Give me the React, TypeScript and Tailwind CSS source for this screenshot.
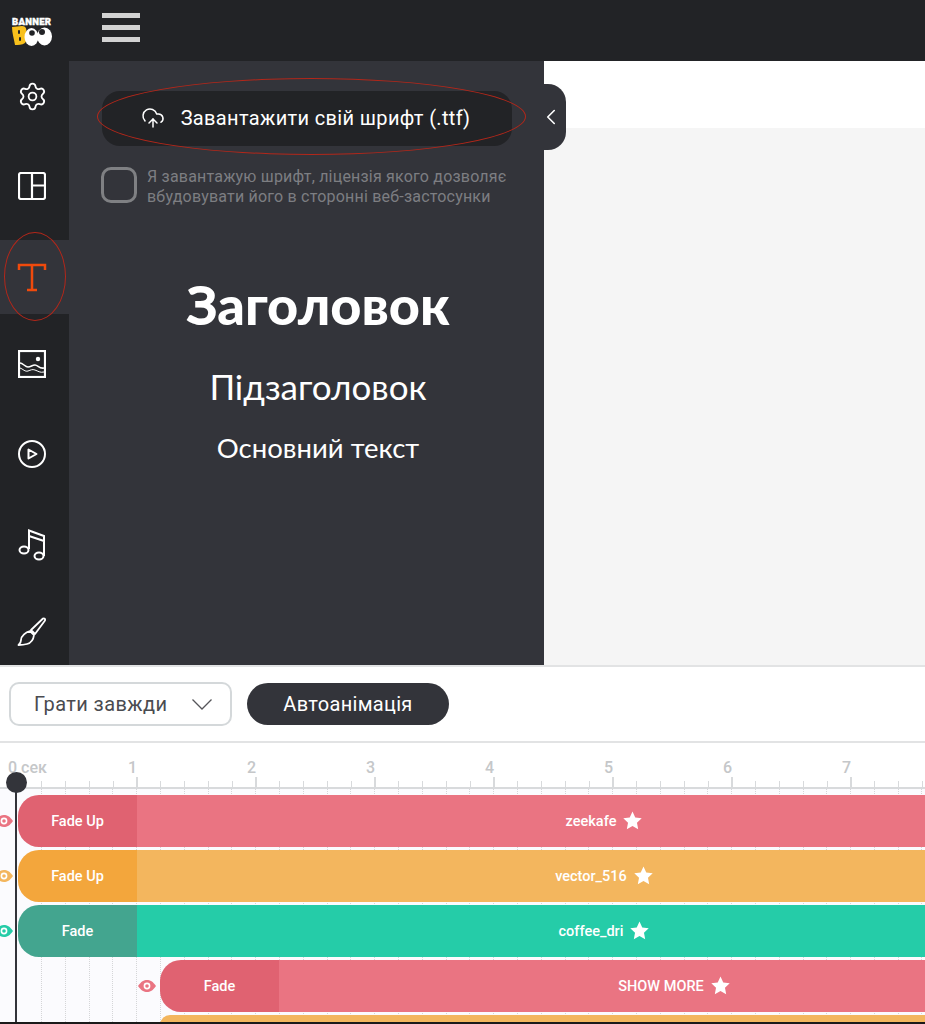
import { ChevronLeft, CloudUpload, Settings } from "lucide-react";

const tracks = [
  { label: "Fade Up", name: "zeekafe", dark: "bg-[#e06271]", light: "bg-[#ea7482]", eye: "#ea7482", indent: false },
  { label: "Fade Up", name: "vector_516", dark: "bg-[#f3a63c]", light: "bg-[#f3b65e]", eye: "#f3b65e", indent: false },
  { label: "Fade", name: "coffee_dri", dark: "bg-[#43a58f]", light: "bg-[#25cca8]", eye: "#25cca8", indent: false },
  { label: "Fade", name: "SHOW MORE", dark: "bg-[#e06271]", light: "bg-[#ea7482]", eye: "#ea7482", indent: true },
];

const gridLines = Array.from({ length: 38 }, (_, i) => i);

function Eye({ color }: { color: string }) {
  return (
    <svg width="18" height="12" viewBox="0 0 18 12" className="shrink-0">
      <path d="M0 6C3 1.500 6 0 9 0s6 1.500 9 6c-3 4.500-6 6-9 6S3 10.500 0 6z" fill={color} />
      <circle cx="9" cy="6" r="3.400" fill="#fff" />
      <circle cx="9" cy="6" r="1.800" fill={color} />
    </svg>
  );
}

function Star() {
  return (
    <svg width="19" height="19" viewBox="0 0 20 20" className="mb-[2px] shrink-0">
      <path d="M10 .5l2.900 6.300 6.800.8-5 4.700 1.300 6.800-6-3.400-6 3.400 1.300-6.800-5-4.700 6.800-.8z" fill="#fff" />
    </svg>
  );
}

function Logo() {
  return (
    <svg width="42" height="32" viewBox="0 0 42 32">
      <text x="1" y="9.500" fontSize="9.500" fontWeight="900" fill="#fff" stroke="#fff" strokeWidth="0.4" fontFamily="Roboto, sans-serif" letterSpacing="0.3">
        BANNER
      </text>
      <path d="M1 12l10-1c4 0 5 3 4 7 2 3 1 8-1 10-3 2-7 2-10 2-1-6-3-12-3-18z" fill="#f8c01c" />
      <rect x="7" y="15" width="2" height="4" rx="1" fill="#222326" />
      <rect x="8" y="22" width="2" height="4" rx="1" fill="#222326" />
      <ellipse cx="20.500" cy="22" rx="7" ry="9" fill="#fff" />
      <ellipse cx="33.500" cy="21.500" rx="7.500" ry="9" fill="#fff" />
      <circle cx="21" cy="18" r="2.800" fill="#222326" />
      <circle cx="31" cy="17" r="3" fill="#222326" />
    </svg>
  );
}

function SideIcon({ children, active, h }: { children: React.ReactNode; active?: boolean; h: string }) {
  return (
    <div className={"flex shrink-0 items-center justify-center pr-[5px] " + h + (active ? " bg-[#33343a]" : "")}>
      {children}
    </div>
  );
}

export default function App() {
  return (
    <div className="relative flex h-[1024px] w-[925px] flex-col overflow-hidden bg-white font-['Roboto',sans-serif]">
      {/* top bar */}
      <header className="flex h-[61px] shrink-0 items-center bg-[#222326] pl-[11px]">
        <Logo />
        <div className="mb-[6px] ml-[49px] flex w-[38px] flex-col gap-[7px]">
          <span className="h-[5px] bg-[#d2d2d2]" />
          <span className="h-[5px] bg-[#d2d2d2]" />
          <span className="h-[5px] bg-[#d2d2d2]" />
        </div>
      </header>

      <div className="flex h-[604px] shrink-0">
        {/* icon rail */}
        <nav className="flex w-[69px] shrink-0 flex-col overflow-hidden bg-[#222326]">
          <SideIcon h="h-[70px]">
            <Settings size={31} strokeWidth={1.4} color="#fff" />
          </SideIcon>
          <SideIcon h="h-[109px]">
            <svg width="28" height="28" viewBox="0 0 28 28" fill="none" stroke="#fff" strokeWidth="2.200">
              <rect x="1" y="1" width="26" height="26" rx="2" />
              <path d="M14 1v26M14 13.500h13" />
            </svg>
          </SideIcon>
          <SideIcon h="h-[74px]" active>
            <svg width="30" height="30" viewBox="0 0 30 30" fill="none" stroke="#f04a0c" strokeWidth="2.500">
              <path d="M2 8V3h26v5M15 3v25M10 28h10" />
            </svg>
          </SideIcon>
          <SideIcon h="h-[100px]">
            <svg width="28" height="28" viewBox="0 0 28 28" fill="none" stroke="#fff" strokeWidth="2.200">
              <rect x="1" y="1" width="26" height="26" />
              <path d="M2 13c3 0 5 4 8 4s4-2 7-2 4 4 9 3" strokeWidth="1.600" />
              <path d="M2 18c3 1 5 4 8 3s4-2 7-1 5 3 9 2" strokeWidth="1" />
              <circle cx="20" cy="9" r="2.200" fill="#fff" stroke="none" />
            </svg>
          </SideIcon>
          <SideIcon h="h-[80px]">
            <svg width="30" height="30" viewBox="0 0 30 30" fill="none" stroke="#fff" strokeWidth="2">
              <circle cx="15" cy="15" r="13" />
              <path d="M11.500 10.500v9l8-4.500z" strokeLinejoin="round" />
            </svg>
          </SideIcon>
          <SideIcon h="h-[102px]">
            <svg width="28" height="32" viewBox="0 0 28 32" fill="none" stroke="#fff" strokeWidth="2">
              <ellipse cx="6" cy="21" rx="4.500" ry="3.500" />
              <ellipse cx="21" cy="27" rx="4.500" ry="3.500" />
              <path d="M11 20V1.500L26 7v20M11 7l15 5" />
            </svg>
          </SideIcon>
          <SideIcon h="h-[72px]">
            <svg width="30" height="30" viewBox="0 0 30 30" fill="none" stroke="#fff" strokeWidth="1.800" strokeLinejoin="round">
              <path d="M26 1.500c1.500-.5 2.500.5 2 2L18 17l-4-4z" />
              <path d="M13 14l4 4c-.5 4-3 8-7 9-3 .8-6 1-8.500 1 2-1.500 2.500-3 2.500-5 0-4 5-8 9-9z" />
            </svg>
          </SideIcon>
        </nav>

        {/* text panel */}
        <section className="flex w-[475px] shrink-0 flex-col bg-[#33343a] pl-[33px] pr-[32px] pt-[30px]">
          <button className="flex h-[55px] w-[410px] items-center justify-center gap-[16px] rounded-[18px] bg-[#222326] pb-[1px] pr-[3px] text-[20px] tracking-[0.35px] text-white">
            <CloudUpload size={24} strokeWidth={1.5} color="#fff" />
            <span>Завантажити свій шрифт (.ttf)</span>
          </button>
          <div className="-ml-[1px] mt-[21px] flex gap-[10px]">
            <div className="h-[36px] w-[36px] shrink-0 rounded-[10px] border-[3px] border-[#7f8083]" />
            <p className="text-[16px] leading-[20px] tracking-[0.2px] text-[#7d7e82]">
              Я завантажую шрифт, ліцензія якого дозволяє
              <br />
              вбудовувати його в сторонні веб-застосунки
            </p>
          </div>
          <div className="ml-[22px] mt-[61px] flex flex-col items-center font-['Lato','Noto_Sans',sans-serif] text-white">
            <h1 className="text-[54px] font-black leading-[74px]">Заголовок</h1>
            <h2 className="mt-[21px] text-[35px] leading-[46px]">Підзаголовок</h2>
            <p className="mt-[20px] text-[27.500px] leading-[38px]">Основний текст</p>
          </div>
        </section>

        {/* canvas */}
        <main className="flex-1 bg-[#f5f5f5]">
          <div className="h-[67px] bg-white" />
        </main>
      </div>

      {/* collapse tab over the canvas */}
      <div className="absolute left-[544px] top-[84px] flex h-[66px] w-[22px] items-center justify-center rounded-r-[18px] bg-[#33343a] pr-[8px]">
        <ChevronLeft size={26} strokeWidth={1.5} color="#fff" className="shrink-0" />
      </div>

      {/* animation toolbar */}
      <div className="flex h-[78px] shrink-0 items-center gap-[15px] border-y-2 border-[#e2e3e4] pl-[9px]">
        <div className="flex h-[44px] w-[223px] items-center justify-between rounded-[10px] border-2 border-[#d4d8da] pl-[23px] pr-[18px] text-[20px] tracking-[0.4px] text-[#4a4b50]">
          <span>Грати завжди</span>
          <svg width="20" height="11" viewBox="0 0 20 11" fill="none" stroke="#55565a" strokeWidth="1.300">
            <path d="M.5.5L10 10 19.500.5" />
          </svg>
        </div>
        <button className="h-[42px] w-[202px] rounded-full bg-[#33343a] text-[20px] tracking-[0.3px] text-white">
          Автоанімація
        </button>
      </div>

      {/* ruler */}
      <div className="h-[46px] shrink-0 border-b-2 border-[#d8dadc] pl-[17px]">
        <div className="flex h-full">
          {["0 сек", "1", "2", "3", "4", "5", "6", "7"].map((n) => (
            <div key={n} className="relative h-full w-[119px] shrink-0">
              <span className={"absolute top-[15px] text-[16px] font-medium leading-[20px] text-[#c5c7c9] " + (n === "0 сек" ? "-left-[9px]" : "-left-[8px]")}>
                {n}
              </span>
              <div className="absolute bottom-0 left-0 flex w-full items-end">
                <span className="h-[10px] w-[24px] border-l-2 border-[#d8dadc]" />
                <span className="h-[6px] w-[24px] border-l border-[#d8dadc]" />
                <span className="h-[6px] w-[24px] border-l border-[#d8dadc]" />
                <span className="h-[6px] w-[24px] border-l border-[#d8dadc]" />
                <span className="h-[6px] w-[23px] border-l border-[#d8dadc]" />
              </div>
            </div>
          ))}
        </div>
      </div>

      {/* tracks */}
      <div className="relative flex flex-1 flex-col gap-[3px] overflow-hidden bg-[#fbfbfe] pt-[6px]">
        <div className="absolute inset-y-0 left-[41px] flex">
          {gridLines.map((i) => (
            <span key={i} className="h-full w-[23.8px] border-l border-dotted border-[#d5d6d8]" />
          ))}
        </div>
        {tracks.map((t) => (
          <div key={t.name} className={"relative flex h-[52px] shrink-0 items-center " + (t.indent ? "pl-[138px]" : "")}>
            <div className={t.indent ? "mr-[4px] flex w-[18px] shrink-0 justify-center" : "-ml-[5px] mr-[5px] flex w-[18px] shrink-0 justify-center"}>
              <Eye color={t.eye} />
            </div>
            <div className={"flex h-[52px] w-[119px] shrink-0 items-center justify-center rounded-l-[21px] pt-[1px] text-[14.5px] font-medium text-white " + t.dark}>
              {t.label}
            </div>
            <div className={"flex h-[52px] shrink-0 items-center justify-center gap-[7px] pt-[1px] text-[14.5px] font-medium text-white " + (t.indent ? "w-[790px] " : "w-[934px] ") + t.light}>
              <span>{t.name}</span>
              <Star />
            </div>
          </div>
        ))}
        <div className="relative ml-[160px] h-[10px] shrink-0 rounded-tl-[21px] bg-[#f3b65e]" />
      </div>

      {/* playhead */}
      <div className="absolute left-[15px] top-[782px] h-[242px] w-[2px] bg-[#33343a]" />
      <div className="absolute left-[6px] top-[772px] h-[21px] w-[21px] rounded-full bg-[#33343a]" />

      {/* annotations */}
      <div className="absolute left-[97px] top-[78px] h-[77px] w-[429px] rounded-[50%] border border-[#b3271a]" />
      <div className="absolute left-[4px] top-[232px] h-[89px] w-[62px] rounded-[50%] border border-[#b3271a]" />
      <div className="absolute bottom-0 left-0 h-[2px] w-full bg-[#1a1a1a]" />
    </div>
  );
}
